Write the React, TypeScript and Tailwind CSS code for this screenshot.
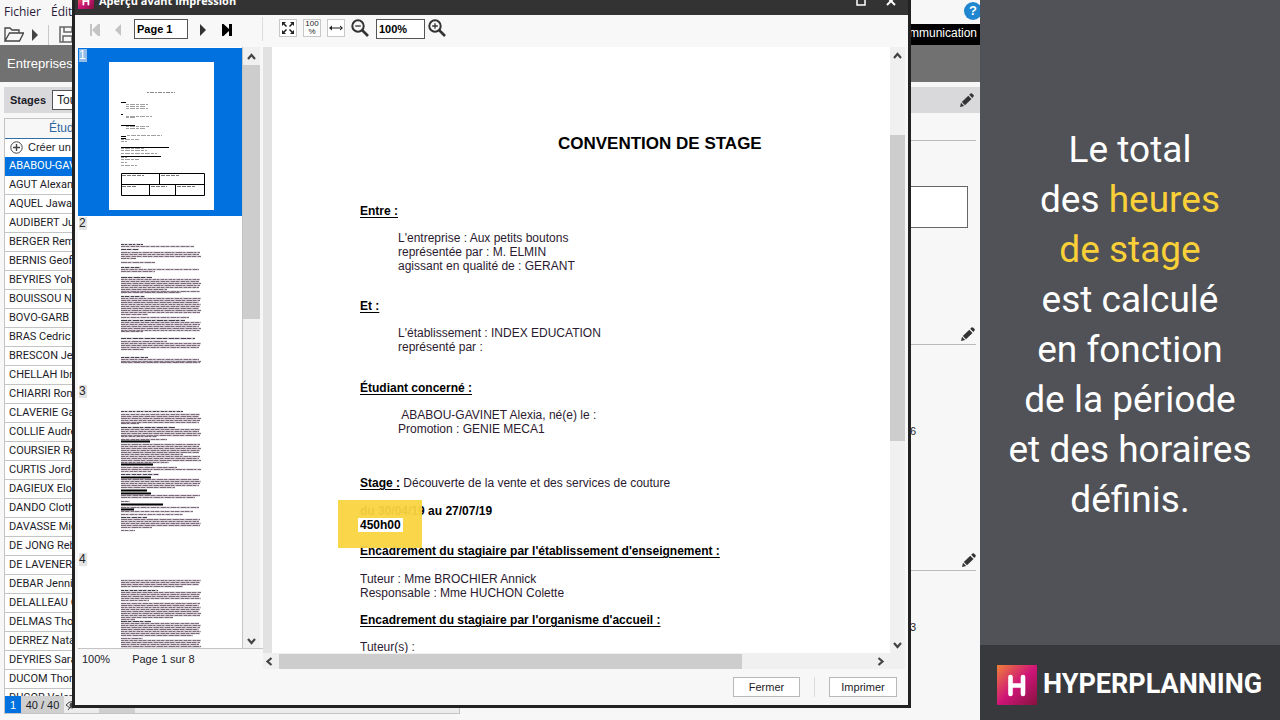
import type { ReactNode } from "react";

const students = [
  "ABABOU-GAV",
  "AGUT Alexan",
  "AQUEL Jawad",
  "AUDIBERT Jul",
  "BERGER Remi",
  "BERNIS Geoff",
  "BEYRIES Yoha",
  "BOUISSOU Na",
  "BOVO-GARB",
  "BRAS Cedric",
  "BRESCON Jea",
  "CHELLAH Ibra",
  "CHIARRI Roma",
  "CLAVERIE Gae",
  "COLLIE Audre",
  "COURSIER Re",
  "CURTIS Jorda",
  "DAGIEUX Elod",
  "DANDO Clothi",
  "DAVASSE Mic",
  "DE JONG Reb",
  "DE LAVENER",
  "DEBAR Jennif",
  "DELALLEAU G",
  "DELMAS Thom",
  "DERREZ Natac",
  "DEYRIES Sara",
  "DUCOM Thom",
  "DUCOR Valer",
];

/* ---------- icons ---------- */

function HLogo({ className }: { className: string }) {
  return (
    <svg viewBox="0 0 40 40" className={className} aria-hidden="true">
      <defs>
        <linearGradient id="hg" x1="0" y1="0" x2="1" y2="1">
          <stop offset="0" stopColor="#f08038" />
          <stop offset="0.5" stopColor="#cf1578" />
          <stop offset="1" stopColor="#86123f" />
        </linearGradient>
      </defs>
      <rect width="40" height="40" fill="url(#hg)" />
      <path d="M13.500 12v17M26 12v17M13.500 20.500h12.500" stroke="#fff" strokeWidth="4.600" strokeLinecap="round" fill="none" />
    </svg>
  );
}

function Pencil() {
  return (
    <svg viewBox="0 0 14 14" className="h-3.5 w-3.5" aria-hidden="true">
      <path d="M0 14l1-4.200 3.200 3.200z" fill="#333" />
      <path d="M1.800 9l6.500-6.300 3.200 3.200L5 12.200z" fill="#333" />
      <path d="M9.200 1.800l1.300-1.200q.7-.7 1.500 0l1.500 1.500q.7.700 0 1.500L12.300 4.900z" fill="#333" />
    </svg>
  );
}

function Chevron({ dir }: { dir: "up" | "down" | "left" | "right" }) {
  const d = {
    up: "M2 7l3.500-4 3.500 4",
    down: "M2 4l3.500 4 3.500-4",
    left: "M7.500 2l-4 3.500 4 3.500",
    right: "M3.500 2l4 3.500-4 3.500",
  }[dir];
  return (
    <svg viewBox="0 0 11 11" className="h-[11px] w-[11px]" aria-hidden="true">
      <path d={d} fill="none" stroke="#444" strokeWidth="2.200" />
    </svg>
  );
}

function Magnifier({ plus }: { plus?: boolean }) {
  return (
    <svg viewBox="0 0 18 18" className="h-[18px] w-[18px]" aria-hidden="true">
      <circle cx="7" cy="7" r="5.700" fill="none" stroke="#333" strokeWidth="2" />
      <path d="M11 11l6 6" stroke="#333" strokeWidth="2.600" />
      <path d={plus ? "M4.200 7h5.600M7 4.200v5.600" : "M4.200 7h5.600"} stroke="#333" strokeWidth="1.300" />
    </svg>
  );
}

function IconButton({ label, className, children }: { label: string; className: string; children: ReactNode }) {
  return (
    <button type="button" aria-label={label} className={`flex shrink-0 items-center justify-center ${className}`}>
      {children}
    </button>
  );
}

/* ---------- page thumbnails ---------- */

type Line = [y: number, width: number, kind?: "head" | "ink"];

function block(from: number, to: number, last: number): Line[] {
  const lines: Line[] = [];
  for (let y = from; y < to; y += 2) lines.push([y, 78 + ((y * 7) % 3)]);
  lines.push([to, last]);
  return lines;
}

const pageTwo: Line[] = [
  [14, 22, "head"], [16, 73], [19, 18, "head"],
  ...block(22, 28, 15), [32, 34],
  [37, 20, "head"], ...block(39, 41, 34),
  [47, 31, "head"], ...block(49, 59, 46),
  ...block(61, 62, 60),
  [66, 24, "head"], ...block(68, 84, 27), [87, 68], [90, 64, "head"],
  ...block(92, 101, 22), [108, 74, "head"], [111, 46], ...block(113, 119, 23),
  [127, 27, "head"], ...block(129, 132, 79),
];

const pageThree: Line[] = [
  [13, 62, "head"], ...block(16, 25, 18), [29, 54, "head"], ...block(31, 38, 36), [41, 46],
  [43, 29, "ink"], ...block(46, 56, 62), ...block(58, 64, 48), [66, 32, "ink"], [69, 56],
  ...block(71, 73, 30), [76, 38, "head"], [79, 30, "ink"], ...block(81, 89, 54), [92, 26, "ink"],
  [95, 30, "ink"], ...block(97, 99, 74), [103, 9], [106, 42, "ink"], [109, 78], [111, 13, "ink"], [113, 72],
  [116, 62], [119, 26, "head"], ...block(121, 129, 31), [132, 14],
];

const pageFour: Line[] = [
  ...block(14, 20, 62), [24, 37, "head"], ...block(26, 34, 28), ...block(37, 51, 52), [53, 14],
  [55, 30, "head"], ...block(57, 69, 72), [72, 22], ...block(74, 90, 60),
];

function PrintedPage({ lines }: { lines: Line[] }) {
  return (
    <svg viewBox="0 0 105 148" className="h-[148px] w-[105px]" aria-hidden="true">
      {lines.map(([y, w, kind], i) => (
        <g key={i}>
          <path d={`M12 ${y + 0.5}h${w}`} stroke={kind === "ink" ? "#000" : "#b8aab6"} strokeWidth={kind === "ink" ? 2 : 1.4} />
          {kind !== "ink" && (
            <path
              d={`M12 ${y + 0.5}h${w}`}
              stroke={kind === "head" ? "#44444e" : "#7c6c7a"}
              strokeWidth="1"
              strokeDasharray={`${3 + (i % 4)} 1 ${2 + (i % 3)} 2`}
            />
          )}
        </g>
      ))}
    </svg>
  );
}

function FirstPage() {
  const faint: [number, number, number][] = [
    [17, 43, 22], [17, 45, 20], [17, 47, 22],
    [17, 55, 26], [17, 56, 10], [17, 65, 24], [17, 67, 20],
    [18, 74, 35], [12, 78, 18], [12, 80, 6], [12, 87, 24], [12, 89, 26], [12, 92, 36],
    [12, 96, 6], [12, 98, 18], [12, 101, 6], [12, 104, 16],
  ];
  const strong: [number, number, number][] = [
    [12, 40, 5], [12, 52, 2], [12, 63, 14], [12, 74, 5], [12, 76, 5], [12, 85, 48], [12, 94, 40],
  ];
  return (
    <svg viewBox="0 0 105 148" className="h-[148px] w-[105px] bg-white" aria-hidden="true">
      <path d="M38 30.500h28" stroke="#888" strokeDasharray="2 1 4 1" />
      {faint.map(([x, y, w], i) => (
        <path key={i} d={`M${x} ${y - 0.5}h${w}`} stroke="#888" strokeDasharray="3 1 5 1" strokeWidth="0.800" />
      ))}
      {strong.map(([x, y, w], i) => (
        <path key={i} d={`M${x} ${y + 0.5}h${w}`} stroke="#000" />
      ))}
      <path d="M12.500 111.500h83v22h-83zM12.500 122.500h83M50.500 111.500v11M40.500 122.500v11M66.500 122.500v11" fill="none" stroke="#000" />
      <path d="M13 113.500h22M52 113.500h18M13 124.500h15M42 124.500h16M68 124.500h18" stroke="#777" strokeDasharray="4 1" />
    </svg>
  );
}

function Thumb({ n, selected, children }: { n: number; selected?: boolean; children: ReactNode }) {
  return (
    <li className={`flex h-[168px] shrink-0 items-start ${selected ? "bg-[#0071de]" : "bg-white"}`}>
      <span
        className={`mt-px ml-px w-2 text-[12px] leading-[13px] ${selected ? "bg-[#8fbce8] text-white" : "bg-[#e4e4e4] text-[#222]"}`}
      >
        {n}
      </span>
      <div className="mt-3.5 ml-[22px]">{children}</div>
    </li>
  );
}

/* ---------- application behind the dialog ---------- */

function Workspace() {
  return (
    <div className="flex h-full flex-col bg-[#f7f7f8] text-[11px] text-[#1c1c28]">
      <div className="flex shrink-0 justify-between">
        <div className="flex h-[45px] flex-col">
          <nav className="flex h-6 items-center gap-2.5 pl-1 font-['Open_Sans',sans-serif] text-[12px] text-[#2a1a38]">
            <a href="#fichier">Fichier</a>
            <a href="#editer">Éditer</a>
          </nav>
          <div className="flex h-[21px] items-center pl-1">
            <IconButton label="Ouvrir" className="h-5 w-5">
              <svg viewBox="0 0 20 17" className="h-[17px] w-5" fill="none" stroke="#444" strokeWidth="1.300" aria-hidden="true">
                <path d="M1 15V2h5l2 2h7v3M1 15L5.500 7h14l-4 8z" />
              </svg>
            </IconButton>
            <IconButton label="Récents" className="ml-2 h-5 w-1.5">
              <svg viewBox="0 0 6 12" className="h-3 w-1.5" aria-hidden="true">
                <path d="M0 0l6 6-6 6z" fill="#444" />
              </svg>
            </IconButton>
            <span className="ml-2.5 h-5 w-px bg-[#c8c8c8]" />
            <IconButton label="Enregistrer" className="ml-2.5 h-5 w-[17px]">
              <svg viewBox="0 0 17 17" className="h-[17px] w-[17px]" fill="none" stroke="#666" strokeWidth="1.500" aria-hidden="true">
                <path d="M1 1h12l3 3v12H1zM5 1v5h8V1M4 16v-6h9v6" />
              </svg>
            </IconButton>
          </div>
        </div>
        <div className="flex w-[300px] flex-col">
          <div className="flex h-6 items-start justify-end">
            <a
              href="#aide"
              className="mt-0.5 -mr-0.5 flex h-[18px] w-[18px] items-center justify-center rounded-full bg-[#1f86cf] text-[13px] font-bold text-white"
            >
              ?
            </a>
          </div>
          <a href="#communication" className="block h-[21px] bg-black pr-[3px] text-right text-[12px] leading-[18px] text-white">
            Communication
          </a>
        </div>
      </div>
      <div className="flex h-[37px] shrink-0 items-center bg-[#717171] pl-[7px] text-[13px] text-white">Entreprises</div>
      <div className="mt-[5px] flex min-h-0 flex-1">
        <section className="flex w-[460px] shrink-0 flex-col pl-1">
          <div className="flex h-[26px] shrink-0 items-center bg-[#d9d9dc] pl-1.5">
            <label htmlFor="stages" className="w-[42px] font-bold">
              Stages
            </label>
            <select id="stages" className="h-5 w-40 appearance-none border border-[#555] bg-white px-1 text-[12px]">
              <option>Tous</option>
            </select>
          </div>
          <div className="mt-[5px] min-h-0 flex-1 overflow-hidden border border-b-0 border-[#c4c4c4] bg-white">
            <table className="w-full table-fixed border-collapse">
              <thead>
                <tr className="h-[19px] border-b border-[#2f6fa5] bg-[#f7f7f8]">
                  <th className="p-0 pl-11 text-left text-[12px] leading-[18px] font-normal text-[#2c65a0]">Étudiant</th>
                </tr>
              </thead>
              <tbody>
                <tr className="h-[18px]">
                  <td className="p-0">
                    <button type="button" className="flex h-[18px] items-center gap-[5px] pl-[5px]">
                      <svg viewBox="0 0 13 13" className="h-[13px] w-[13px]" fill="none" stroke="#444" aria-hidden="true">
                        <circle cx="6.500" cy="6.500" r="5.700" />
                        <path d="M6.500 3v7M3 6.500h7" strokeWidth="1.400" />
                      </svg>
                      Créer un stage
                    </button>
                  </td>
                </tr>
                {students.map((name, i) => (
                  <tr key={name} className={i === 0 ? "h-[19px] bg-[#0071de] text-white" : "h-[19px] border-b border-[#c4c4c4]"}>
                    <td className="p-0 pl-1 font-['Roboto',sans-serif] leading-[18px] whitespace-nowrap">{name}</td>
                  </tr>
                ))}
              </tbody>
            </table>
          </div>
          <footer className="mb-1.5 flex h-[18px] shrink-0 items-stretch border border-t-0 border-[#c4c4c4] bg-[#ececec] leading-[18px]">
            <span className="w-4 bg-[#0071de] text-center text-white">1</span>
            <span className="w-[43px] bg-[#cfcfcf] text-center">40 / 40</span>
            <svg viewBox="0 0 14 12" className="mt-[3px] ml-px h-3 w-3.5" fill="none" stroke="#444" aria-hidden="true">
              <path d="M1 6q6-7 12 0-6 6-12 0M3 11L11 1" />
              <circle cx="7" cy="6" r="2" fill="#444" />
            </svg>
            <span className="ml-5 w-9 bg-[#cfcfcf]" />
          </footer>
        </section>
        <section className="ml-1 flex flex-1 flex-col">
          <div className="flex h-[26px] shrink-0 items-center justify-end bg-[#d9d9db] pr-1.5">
            <Pencil />
          </div>
          <div className="mr-1 h-7 shrink-0 border-b border-[#bbb]" />
          <textarea aria-label="Remarques" className="mt-[45px] mr-3 h-[42px] shrink-0 resize-none border border-[#666] bg-white" />
          <div className="mr-1 flex h-[117px] shrink-0 items-end justify-end border-b border-[#bbb] pr-px pb-[3px]">
            <Pencil />
          </div>
          <div className="mr-1 flex h-[226px] shrink-0 flex-col items-end justify-between border-b border-[#bbb] pt-[78px] pb-[3px]">
            <span className="mr-[60px]">6</span>
            <Pencil />
          </div>
          <span className="mt-12 mr-16 text-right">3</span>
        </section>
      </div>
    </div>
  );
}

/* ---------- print preview dialog ---------- */

function PreviewToolbar() {
  return (
    <div className="flex h-8 shrink-0 items-center bg-[#f8f8f8] pb-1 pl-2">
      <IconButton label="Première page" className="mt-0.5 h-5 w-6">
        <svg viewBox="0 0 10 12" className="h-3 w-2.5" fill="#c4c4c4" aria-hidden="true">
          <path d="M0 0h2v12H0zM8 0v12L2 6zM8 0h2v12H8z" />
        </svg>
      </IconButton>
      <IconButton label="Page précédente" className="mt-0.5 h-5 w-[22px]">
        <svg viewBox="0 0 6 12" className="h-3 w-1.5" fill="#c4c4c4" aria-hidden="true">
          <path d="M6 0v12L0 6z" />
        </svg>
      </IconButton>
      <input
        aria-label="Page"
        defaultValue="Page 1"
        className="ml-[5px] h-5 w-[54px] border border-[#555] bg-white px-0.5 text-[11px] font-bold text-black"
      />
      <IconButton label="Page suivante" className="mt-0.5 ml-[3px] h-5 w-6">
        <svg viewBox="0 0 6 12" className="h-3 w-1.5" fill="#333" aria-hidden="true">
          <path d="M0 0v12l6-6z" />
        </svg>
      </IconButton>
      <IconButton label="Dernière page" className="mt-0.5 h-5 w-6">
        <svg viewBox="0 0 10 12" className="h-3 w-2.5" fill="#000" aria-hidden="true">
          <path d="M0 0h1.500l5.500 5V0h3v12H7V7l-5.500 5H0z" />
        </svg>
      </IconButton>
      <span className="ml-[23px] h-6 w-px bg-[#dcdcdc]" />
      <div className="mb-0.5 ml-4 flex items-center gap-1.5">
        <IconButton label="Page entière" className="h-[18px] w-[18px] border border-[#c8c8c8] bg-white">
          <svg viewBox="0 0 12 12" className="h-3 w-3" fill="#222" stroke="#222" strokeWidth="1.500" aria-hidden="true">
            <path d="M1.500 1.500l3 3M10.500 1.500l-3 3M1.500 10.500l3-3M10.500 10.500l-3-3" />
            <path d="M0 0h4L0 4zM12 0H8l4 4zM0 12h4L0 8zM12 12H8l4-4z" stroke="none" />
          </svg>
        </IconButton>
        <IconButton label="Taille réelle" className="h-[18px] w-[18px] flex-col border border-[#c8c8c8] bg-white text-[8px] leading-[8px] text-[#222]">
          <span>100</span>
          <span>%</span>
        </IconButton>
        <IconButton label="Largeur de page" className="h-[18px] w-[18px] border border-[#c8c8c8] bg-white">
          <svg viewBox="0 0 14 6" className="h-1.5 w-3.5" fill="#222" aria-hidden="true">
            <path d="M0 3l3-2.500v5zM14 3l-3-2.500v5zM2 2.500h10v1H2z" />
          </svg>
        </IconButton>
        <IconButton label="Zoom arrière" className="h-[18px] w-[18px]">
          <Magnifier />
        </IconButton>
      </div>
      <input
        aria-label="Zoom"
        defaultValue="100%"
        className="ml-[7px] h-5 w-[49px] border border-[#555] bg-white px-0.5 text-[11px] font-bold text-black"
      />
      <IconButton label="Zoom avant" className="mb-0.5 ml-[3px] h-[18px] w-[18px]">
        <Magnifier plus />
      </IconButton>
    </div>
  );
}

function Heading({ children }: { children: ReactNode }) {
  return <h2 className="font-bold text-black underline underline-offset-2">{children}</h2>;
}

function ConventionDocument() {
  return (
    <article className="pl-[88px] text-[12px] leading-[14px] whitespace-nowrap text-[#2b1a30]">
      <h1 className="mt-[87px] ml-[198px] text-[17px] leading-5 font-bold text-black">CONVENTION DE STAGE</h1>
      <div className="mt-[50px]">
        <Heading>Entre :</Heading>
      </div>
      <div className="mt-[13px] ml-[38px]">
        <p>L'entreprise : Aux petits boutons</p>
        <p>représentée par : M. ELMIN</p>
        <p>agissant en qualité de : GERANT</p>
      </div>
      <div className="mt-[26px]">
        <Heading>Et :</Heading>
      </div>
      <div className="mt-[13px] ml-[38px]">
        <p>L'établissement : INDEX EDUCATION</p>
        <p>représenté par :</p>
      </div>
      <div className="mt-[27px]">
        <Heading>Étudiant concerné :</Heading>
      </div>
      <div className="mt-[13px] ml-[38px]">
        <p>&nbsp;ABABOU-GAVINET Alexia, né(e) le :</p>
        <p>Promotion : GENIE MECA1</p>
      </div>
      <p className="mt-10">
        <strong className="text-black underline underline-offset-2">Stage :</strong> Découverte de la vente et des services de couture
      </p>
      <div className="relative mt-3.5 font-bold text-black">
        <p>du 30/04/19 au 27/07/19</p>
        <div className="absolute -top-1 -left-[22px] h-12 w-[84px] bg-[#fad440]/95" />
        <p className="relative -ml-0.5 w-[45px] bg-white pl-0.5">450h00</p>
      </div>
      <div className="mt-3">
        <Heading>Encadrement du stagiaire par l'établissement d'enseignement :</Heading>
      </div>
      <div className="mt-3.5">
        <p>Tuteur : Mme BROCHIER Annick</p>
        <p>Responsable : Mme HUCHON Colette</p>
      </div>
      <div className="mt-[13px]">
        <Heading>Encadrement du stagiaire par l'organisme d'accueil :</Heading>
      </div>
      <p className="mt-[13px]">Tuteur(s) :</p>
    </article>
  );
}

function PreviewDialog() {
  return (
    <div
      role="dialog"
      aria-label="Aperçu avant impression"
      className="absolute -top-3 right-[69px] bottom-3 left-[72px] flex flex-col border-[3px] border-[#222] bg-[#f7f7f8] text-[11px] text-[#1c1c28]"
    >
      <header className="flex h-6 shrink-0 items-center bg-[#333] pb-1 pl-[3px] text-white">
        <HLogo className="h-4 w-4" />
        <span className="ml-[5px] font-['Open_Sans',sans-serif] text-[11px] font-bold">Aperçu avant impression</span>
        <div className="ml-auto flex gap-5 pr-3">
          <IconButton label="Agrandir" className="h-[10px] w-[10px]">
            <svg viewBox="0 0 10 10" className="h-2.5 w-2.5" fill="none" stroke="#fff" strokeWidth="1.500" aria-hidden="true">
              <path d="M1 1h8v8H1z" />
            </svg>
          </IconButton>
          <IconButton label="Fermer la fenêtre" className="h-[10px] w-[10px]">
            <svg viewBox="0 0 10 10" className="h-2.5 w-2.5" stroke="#fff" strokeWidth="2" aria-hidden="true">
              <path d="M1 1l8 8M9 1L1 9" />
            </svg>
          </IconButton>
        </div>
      </header>
      <PreviewToolbar />
      <div className="flex min-h-0 flex-1">
        <div className="flex w-[188px] shrink-0 flex-col pl-[3px]">
          <div className="flex min-h-0 flex-1 border-b border-[#c4c4c4]">
            <ul className="flex min-h-0 flex-1 flex-col overflow-hidden border-r border-[#c4c4c4] bg-white pt-px">
              <Thumb n={1} selected>
                <FirstPage />
              </Thumb>
              <Thumb n={2}>
                <PrintedPage lines={pageTwo} />
              </Thumb>
              <Thumb n={3}>
                <PrintedPage lines={pageThree} />
              </Thumb>
              <Thumb n={4}>
                <PrintedPage lines={pageFour} />
              </Thumb>
            </ul>
            <div className="flex w-[17px] flex-col items-center bg-[#f0f0f0]">
              <span className="flex h-[18px] items-center pt-0.5">
                <Chevron dir="up" />
              </span>
              <span className="h-[254px] w-full bg-[#cdcdcd]" />
              <span className="mt-auto mb-0.5">
                <Chevron dir="down" />
              </span>
            </div>
            <div className="w-[3px] bg-[#f7f7f8]" />
          </div>
          <div className="flex h-5 items-center gap-[22px] pt-px pl-1">
            <span>100%</span>
            <span>Page 1 sur 8</span>
          </div>
        </div>
        <div className="flex min-w-0 flex-1 flex-col pr-[3px]">
          <div className="flex min-h-0 flex-1 border-l-9 border-[#e2e2e2]">
            <div className="min-w-0 flex-1 overflow-hidden bg-white">
              <ConventionDocument />
            </div>
            <div className="flex w-[15px] flex-col items-center bg-[#f0f0f0]">
              <span className="mt-1">
                <Chevron dir="up" />
              </span>
              <span className="mt-[73px] h-[306px] w-full bg-[#cdcdcd]" />
              <span className="mt-auto mb-[3px]">
                <Chevron dir="down" />
              </span>
            </div>
          </div>
          <div className="flex h-4 shrink-0 items-center bg-[#f0f0f0] pr-[19px]">
            <span className="ml-px">
              <Chevron dir="left" />
            </span>
            <span className="ml-1 h-[15px] w-[463px] bg-[#cdcdcd]" />
            <span className="ml-auto">
              <Chevron dir="right" />
            </span>
          </div>
        </div>
      </div>
      <div className="flex h-9 shrink-0 items-center justify-end pr-[11px]">
        <button type="button" className="h-5 w-[67px] border border-[#b8b8b8] bg-white">
          Fermer
        </button>
        <span className="mx-3.5 h-5 w-px bg-[#dcdcdc]" />
        <button type="button" className="h-5 w-[68px] border border-[#b8b8b8] bg-white">
          Imprimer
        </button>
      </div>
    </div>
  );
}

export default function App() {
  return (
    <div className="flex h-screen font-['Liberation_Sans',Arial,sans-serif]">
      <main className="relative min-w-0 flex-1 overflow-hidden">
        <Workspace />
        <PreviewDialog />
      </main>
      <aside className="flex w-[300px] shrink-0 flex-col bg-[#505257] font-['Roboto',sans-serif] text-white">
        <p className="flex-1 pt-[125px] text-center text-[37px] leading-[50px]">
          Le total
          <br />
          des <span className="text-[#fad038]">heures</span>
          <br />
          <span className="text-[#fad038]">de stage</span>
          <br />
          est calculé
          <br />
          en fonction
          <br />
          de la période
          <br />
          et des horaires
          <br />
          définis.
        </p>
        <div className="flex h-[75px] items-center gap-1.5 bg-[#38393d] pt-1 pl-[17px]">
          <HLogo className="h-10 w-10" />
          <span className="text-[27px] font-bold">HYPERPLANNING</span>
        </div>
      </aside>
    </div>
  );
}
